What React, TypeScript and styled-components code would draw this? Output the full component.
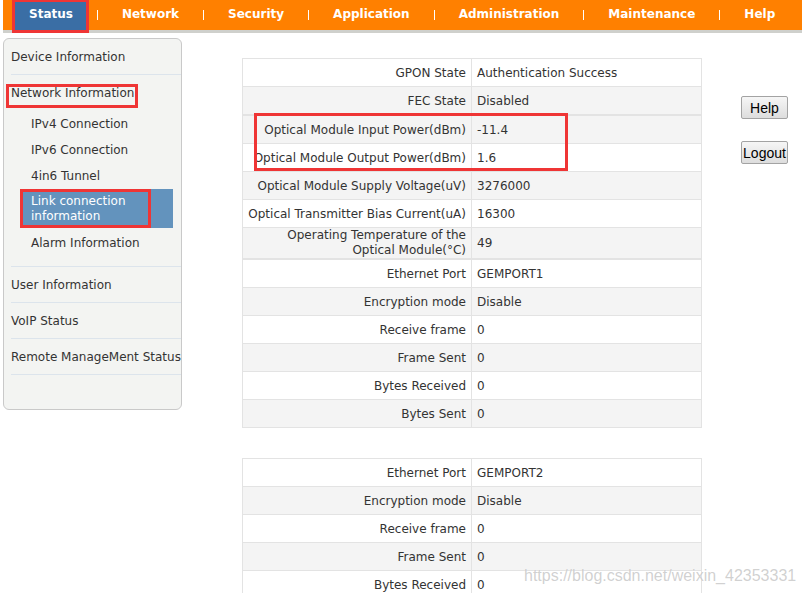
import React from "react";
import styled, { createGlobalStyle } from "styled-components";

const GlobalStyle = createGlobalStyle`
  html, body { margin: 0; padding: 0; overflow: hidden; background: #fff; }
  body {
    font-family: "DejaVu Sans", Verdana, sans-serif;
    font-size: 12px;
    color: #333;
  }
`;

const Page = styled.div`
  position: relative;
  width: 802px;
  height: 593px;
  overflow: hidden;
`;

const TopBar = styled.nav`
  margin-left: 3px;
  height: 30px;
  background: #ff8000;
  border-bottom: 3px solid #cfd0cc;
  display: flex;
  align-items: stretch;
  padding-left: 12px;
`;

const MenuItem = styled.div<{ $active?: boolean }>`
  display: flex;
  align-items: flex-start;
  box-sizing: border-box;
  padding: 7px 14px 0;
  line-height: 14px;
  font-weight: bold;
  font-size: 12px;
  color: #fff;
  white-space: nowrap;
  background: ${(p) => (p.$active ? "#3a6ea5" : "transparent")};
`;

const MenuSep = styled.span`
  align-self: center;
  width: 1px;
  height: 10px;
  margin: 0 10px;
  background: #fff;
`;

const Body = styled.div`
  display: flex;
  align-items: flex-start;
  padding-top: 5px;
`;

const Sidebar = styled.aside`
  box-sizing: border-box;
  flex: none;
  width: 179px;
  height: 372px;
  margin-left: 3px;
  border: 1px solid #c9c9c9;
  border-radius: 6px;
  background: #f3f4f2;
`;

const NavItem = styled.div`
  margin-left: 7px;
  height: 35px;
  line-height: 37px;
  border-bottom: 1px solid #dce4ec;
  white-space: nowrap;
`;

const NavGroup = styled.div`
  margin-left: 7px;
  padding-bottom: 11px;
  border-bottom: 1px solid #dce4ec;
`;

const NavGroupTitle = styled.div`
  height: 35px;
  line-height: 37px;
  white-space: nowrap;
`;

const SubItem = styled.div<{ $active?: boolean }>`
  margin: ${(p) => (p.$active ? "1px 8px 1px 12px" : "0 8px 0 12px")};
  padding: ${(p) => (p.$active ? "5px 8px 4px" : "0 8px")};
  height: ${(p) => (p.$active ? "auto" : "26px")};
  line-height: ${(p) => (p.$active ? "15px" : "28px")};
  background: ${(p) => (p.$active ? "#6393bd" : "transparent")};
  color: ${(p) => (p.$active ? "#fff" : "inherit")};
`;

const Main = styled.main`
  display: flex;
  align-items: flex-start;
  margin-left: 60px;
  margin-top: 20px;
`;

const Tables = styled.div`
  display: flex;
  flex-direction: column;
  width: 460px;
`;

const InfoTable = styled.table<{ $spaced?: boolean }>`
  width: 460px;
  border-collapse: collapse;
  table-layout: fixed;
  margin-top: ${(p) => (p.$spaced ? "30px" : "0")};
`;

const Row = styled.tr<{ $shade?: boolean }>`
  background: ${(p) => (p.$shade ? "#f4f4f4" : "#fff")};
`;

const LabelCell = styled.td<{ $wrap?: boolean }>`
  width: 221px;
  height: 25px;
  padding: ${(p) => (p.$wrap ? "0 5px 0 2px" : "2px 5px 0 2px")};
  border: 1px solid #e3e3e3;
  text-align: right;
  vertical-align: middle;
  line-height: 15px;
`;

const ValueCell = styled.td<{ $wrap?: boolean }>`
  height: 25px;
  padding: ${(p) => (p.$wrap ? "0 5px" : "2px 5px 0")};
  border: 1px solid #e3e3e3;
  vertical-align: middle;
  line-height: 15px;
  white-space: nowrap;
`;

const SideButtons = styled.div`
  display: flex;
  flex-direction: column;
  gap: 22px;
  margin-left: 39px;
  margin-top: 38px;
`;

const Btn = styled.button`
  width: 47px;
  height: 23px;
  padding: 0;
  font-family: "Liberation Sans", Arial, sans-serif;
  font-size: 14px;
  color: #000;
  background: linear-gradient(#f6f6f6, #dddddd);
  border: 1px solid #a3a3a3;
  border-radius: 2px;
`;

const Annot = styled.div<{ $x: number; $y: number; $w: number; $h: number }>`
  position: absolute;
  left: ${(p) => p.$x}px;
  top: ${(p) => p.$y}px;
  width: ${(p) => p.$w}px;
  height: ${(p) => p.$h}px;
  box-sizing: border-box;
  border: 3px solid #ef3535;
  pointer-events: none;
`;

const Watermark = styled.div`
  position: absolute;
  left: 524px;
  top: 566px;
  font-family: "Liberation Sans", Arial, sans-serif;
  font-size: 16px;
  line-height: 20px;
  color: rgba(170, 170, 170, 0.55);
  text-shadow: 0 0 1px rgba(255, 255, 255, 0.8);
  white-space: nowrap;
  pointer-events: none;
`;

type R = { label: string; value: string; shade: boolean; wrap?: boolean };

const groupA: R[] = [
  { label: "GPON State", value: "Authentication Success", shade: false },
  { label: "FEC State", value: "Disabled", shade: true },
];

const groupB: R[] = [
  { label: "Optical Module Input Power(dBm)", value: "-11.4", shade: true },
  { label: "Optical Module Output Power(dBm)", value: "1.6", shade: false },
  { label: "Optical Module Supply Voltage(uV)", value: "3276000", shade: true },
  { label: "Optical Transmitter Bias Current(uA)", value: "16300", shade: false },
  { label: "Operating Temperature of the Optical Module(°C)", value: "49", shade: true, wrap: true },
];

const port = (name: string): R[] => [
  { label: "Ethernet Port", value: name, shade: false },
  { label: "Encryption mode", value: "Disable", shade: true },
  { label: "Receive frame", value: "0", shade: false },
  { label: "Frame Sent", value: "0", shade: true },
  { label: "Bytes Received", value: "0", shade: false },
  { label: "Bytes Sent", value: "0", shade: true },
];

const Info = ({ rows, spaced }: { rows: R[]; spaced?: boolean }) => (
  <InfoTable $spaced={spaced}>
    <tbody>
      {rows.map((r, i) => (
        <Row key={i} $shade={r.shade}>
          <LabelCell $wrap={r.wrap}>{r.label}</LabelCell>
          <ValueCell $wrap={r.wrap}>{r.value}</ValueCell>
        </Row>
      ))}
    </tbody>
  </InfoTable>
);

const menu = ["Status", "Network", "Security", "Application", "Administration", "Maintenance", "Help"];

export default function App() {
  return (
    <Page>
      <GlobalStyle />
      <TopBar>
        {menu.map((m, i) => (
          <React.Fragment key={m}>
            {i > 0 && <MenuSep />}
            <MenuItem $active={i === 0}>{m}</MenuItem>
          </React.Fragment>
        ))}
      </TopBar>
      <Body>
        <Sidebar>
          <NavItem>Device Information</NavItem>
          <NavGroup>
            <NavGroupTitle>Network Information</NavGroupTitle>
            <SubItem>IPv4 Connection</SubItem>
            <SubItem>IPv6 Connection</SubItem>
            <SubItem>4in6 Tunnel</SubItem>
            <SubItem $active>Link connection information</SubItem>
            <SubItem>Alarm Information</SubItem>
          </NavGroup>
          <NavItem>User Information</NavItem>
          <NavItem>VoIP Status</NavItem>
          <NavItem>Remote ManageMent Status</NavItem>
        </Sidebar>
        <Main>
          <Tables>
            <Info rows={groupA} />
            <Info rows={groupB} />
            <Info rows={port("GEMPORT1")} />
            <Info rows={port("GEMPORT2")} spaced />
          </Tables>
          <SideButtons>
            <Btn>Help</Btn>
            <Btn>Logout</Btn>
          </SideButtons>
        </Main>
      </Body>
      <Annot $x={12} $y={-1} $w={77} $h={34} />
      <Annot $x={6} $y={84} $w={132} $h={24} />
      <Annot $x={20} $y={189} $w={131} $h={39} />
      <Annot $x={254} $y={113} $w={314} $h={58} />
      <Watermark>https://blog.csdn.net/weixin_42353331</Watermark>
    </Page>
  );
}
